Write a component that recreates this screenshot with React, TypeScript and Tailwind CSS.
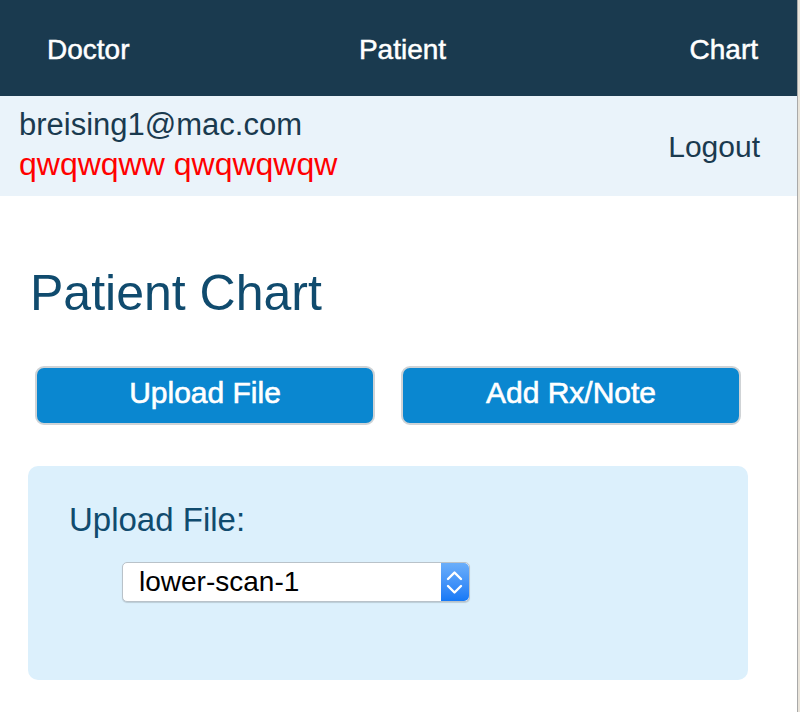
const font = { fontFamily: '"Liberation Sans", Arial, sans-serif' };

const Stepper = () => (
  <div className="flex h-full w-[28px] items-center justify-center rounded-r-[5px] bg-gradient-to-b from-[#6aaefa] to-[#1479f6]">
    <svg width="28" height="40" viewBox="0 0 28 40" fill="none" stroke="white" strokeWidth="2.4" strokeLinecap="round" strokeLinejoin="round">
      <path d="M7 17 L13.5 10.5 L20 17" />
      <path d="M7 24 L13.5 30.5 L20 24" />
    </svg>
  </div>
);

export default function App() {
  return (
    <div className="flex h-[712px] w-[800px] overflow-hidden bg-white" style={font}>
      <div className="flex w-[797px] flex-col">
        <nav className="grid h-[96px] grid-cols-3 items-center bg-[#1a3a4f] pl-[47px] pr-[39px] pt-[3px] text-[28px] text-white [-webkit-text-stroke:0.5px_white]">
          <span>Doctor</span>
          <span className="text-center">Patient</span>
          <span className="text-right">Chart</span>
        </nav>

        <div className="flex h-[100px] items-center justify-between bg-[#eaf3fa] pl-[19px] pr-[37px]">
          <div className="flex h-full flex-col pt-[10px]">
            <span className="text-[31px] leading-[38px] text-[#1a3a4f]">breising1@mac.com</span>
            <span className="text-[32px] leading-[40px] text-[#ff0000]">qwqwqww qwqwqwqw</span>
          </div>
          <span className="text-[30px] text-[#1a3a4f]">Logout</span>
        </div>

        <div className="flex flex-col px-[28px] pt-[72px]">
          <h1 className="pl-[2px] text-[50px] leading-[50px] text-[#104b6e]">Patient Chart</h1>

          <div className="mt-[48px] flex gap-[26px] px-[7px]">
            <button className="h-[59px] w-[340px] rounded-[9px] border-2 border-[#cfd3d6] bg-[#0a87d0] pb-[6px] text-[30px] text-white [-webkit-text-stroke:0.6px_white]">
              Upload File
            </button>
            <button className="h-[59px] w-[340px] rounded-[9px] border-2 border-[#cfd3d6] bg-[#0a87d0] pb-[6px] text-[30px] text-white [-webkit-text-stroke:0.6px_white]">
              Add Rx/Note
            </button>
          </div>

          <div className="mt-[41px] flex h-[214px] w-[720px] flex-col rounded-[10px] bg-[#dcf0fc] pl-[41px] pt-[37px]">
            <span className="text-[33px] leading-[33px] text-[#104b6e]">Upload File:</span>
            <div className="ml-[53px] mt-[26px] flex h-[40px] w-[348px] items-center rounded-[5px] border border-[#b9c2c9] bg-white shadow-[0_1px_1px_rgba(0,0,0,0.15)]">
              <span className="flex-1 pl-[16px] text-[28px] text-black">lower-scan-1</span>
              <Stepper />
            </div>
          </div>
        </div>
      </div>
      <div className="flex-1 border-l border-[#a9a9a9] bg-[#e9e4da]" />
    </div>
  );
}
